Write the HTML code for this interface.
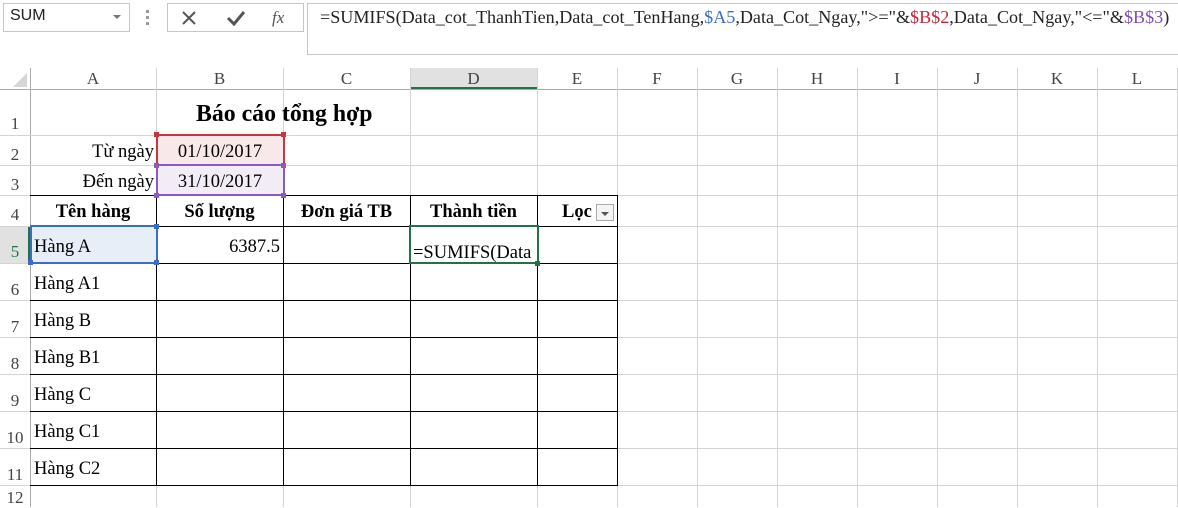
<!DOCTYPE html><html><head><meta charset="utf-8"><style>
*{margin:0;padding:0;box-sizing:border-box}
body{width:1178px;height:507px;background:#fff;position:relative;overflow:hidden;font-family:"Liberation Serif",serif;font-size:18.5px;color:#000}
.a{position:absolute}
.vl{position:absolute;width:1px;background:#d4d4d4}
.hl{position:absolute;height:1px;background:#d4d4d4}
.ch{position:absolute;top:68px;height:21px;text-align:center;color:#444;font-size:17px;line-height:22px}
.rh{position:absolute;left:0;width:30px;text-align:center;color:#444;font-size:17px}
.bv{position:absolute;width:1px;background:#000}
.bh{position:absolute;height:1px;background:#000}
.t{position:absolute;white-space:nowrap}
.b{font-weight:bold}
</style></head><body>
<div class="a" style="left:3px;top:3px;width:127px;height:29px;border:1px solid #c6c6c6"></div>
<div class="t" style="left:10px;top:7px;font-family:'Liberation Sans',sans-serif;font-size:16px;color:#222">SUM</div>
<div class="a" style="left:113px;top:15px;border-left:4px solid transparent;border-right:4px solid transparent;border-top:4px solid #777"></div>
<div class="a" style="left:146px;top:10px;width:3px;height:3px;background:#999"></div>
<div class="a" style="left:146px;top:16px;width:3px;height:3px;background:#999"></div>
<div class="a" style="left:146px;top:22px;width:3px;height:3px;background:#999"></div>
<div class="a" style="left:167px;top:3px;width:137px;height:29px;border:1px solid #c6c6c6"></div>
<svg class="a" style="left:180px;top:8px" width="110" height="20"><path d="M3 4L15 16M15 4L3 16" stroke="#555" stroke-width="2"/><path d="M48 10L54 16L64 4" stroke="#555" stroke-width="3" fill="none"/><text x="92" y="15" font-family="Liberation Serif" font-style="italic" font-size="17" fill="#555">fx</text></svg>
<div class="a" style="left:307px;top:3px;width:875px;height:52px;border:1px solid #c6c6c6"></div>
<div class="t" style="left:320px;top:7px;font-size:18.1px;color:#222">=SUMIFS(Data_cot_ThanhTien,Data_cot_TenHang,<span style="color:#3b6dc8">$A5</span>,Data_Cot_Ngay,"&gt;="&amp;<span style="color:#c8253a">$B$2</span>,Data_Cot_Ngay,"&lt;="&amp;<span style="color:#7e4fb8">$B$3</span>)</div>
<div class="hl" style="left:0;top:89px;width:1178px;background:#ababab"></div>
<div class="vl" style="left:30px;top:68px;height:439px;background:#ababab"></div>
<svg class="a" style="left:12px;top:72px" width="16" height="16"><path d="M15 1L15 15L1 15Z" fill="#d6d6d6"/></svg>
<div class="a" style="left:410px;top:68px;width:128px;height:21px;background:#e1e1e1;border-bottom:2px solid #217346"></div>
<div class="a" style="left:0;top:226px;width:30px;height:37px;background:#e1e1e1;border-right:2px solid #217346"></div>
<div class="ch" style="left:30px;width:126px">A</div>
<div class="ch" style="left:156px;width:127px">B</div>
<div class="ch" style="left:283px;width:127px">C</div>
<div class="ch" style="left:410px;width:127px">D</div>
<div class="ch" style="left:537px;width:80px">E</div>
<div class="ch" style="left:617px;width:80px">F</div>
<div class="ch" style="left:697px;width:80px">G</div>
<div class="ch" style="left:777px;width:80px">H</div>
<div class="ch" style="left:857px;width:80px">I</div>
<div class="ch" style="left:937px;width:80px">J</div>
<div class="ch" style="left:1017px;width:80px">K</div>
<div class="ch" style="left:1097px;width:80px">L</div>
<div class="vl" style="left:156px;top:68px;height:439px"></div>
<div class="vl" style="left:283px;top:68px;height:439px"></div>
<div class="vl" style="left:410px;top:68px;height:439px"></div>
<div class="vl" style="left:537px;top:68px;height:439px"></div>
<div class="vl" style="left:617px;top:68px;height:439px"></div>
<div class="vl" style="left:697px;top:68px;height:439px"></div>
<div class="vl" style="left:777px;top:68px;height:439px"></div>
<div class="vl" style="left:857px;top:68px;height:439px"></div>
<div class="vl" style="left:937px;top:68px;height:439px"></div>
<div class="vl" style="left:1017px;top:68px;height:439px"></div>
<div class="vl" style="left:1097px;top:68px;height:439px"></div>
<div class="vl" style="left:1177px;top:68px;height:439px"></div>
<div class="hl" style="left:0;top:135px;width:1178px"></div>
<div class="hl" style="left:0;top:165px;width:1178px"></div>
<div class="hl" style="left:0;top:195px;width:1178px"></div>
<div class="hl" style="left:0;top:226px;width:1178px"></div>
<div class="hl" style="left:0;top:263px;width:1178px"></div>
<div class="hl" style="left:0;top:300px;width:1178px"></div>
<div class="hl" style="left:0;top:337px;width:1178px"></div>
<div class="hl" style="left:0;top:374px;width:1178px"></div>
<div class="hl" style="left:0;top:411px;width:1178px"></div>
<div class="hl" style="left:0;top:448px;width:1178px"></div>
<div class="hl" style="left:0;top:485px;width:1178px"></div>
<div class="rh" style="top:114px">1</div>
<div class="rh" style="top:145px">2</div>
<div class="rh" style="top:175px">3</div>
<div class="rh" style="top:205px">4</div>
<div class="rh" style="top:242px;color:#217346">5</div>
<div class="rh" style="top:280px">6</div>
<div class="rh" style="top:317px">7</div>
<div class="rh" style="top:354px">8</div>
<div class="rh" style="top:391px">9</div>
<div class="rh" style="top:428px">10</div>
<div class="rh" style="top:465px">11</div>
<div class="rh" style="top:488px">12</div>
<div class="a" style="left:157px;top:136px;width:126px;height:29px;background:#f9e8e9"></div>
<div class="a" style="left:157px;top:166px;width:126px;height:29px;background:#f1ecf6"></div>
<div class="a" style="left:31px;top:227px;width:125px;height:36px;background:#e8eef8"></div>
<div class="bh" style="left:30px;top:195px;width:588px"></div>
<div class="bh" style="left:30px;top:226px;width:588px"></div>
<div class="bh" style="left:30px;top:263px;width:588px"></div>
<div class="bh" style="left:30px;top:300px;width:588px"></div>
<div class="bh" style="left:30px;top:337px;width:588px"></div>
<div class="bh" style="left:30px;top:374px;width:588px"></div>
<div class="bh" style="left:30px;top:411px;width:588px"></div>
<div class="bh" style="left:30px;top:448px;width:588px"></div>
<div class="bh" style="left:30px;top:485px;width:588px"></div>
<div class="bv" style="left:156px;top:195px;height:291px"></div>
<div class="bv" style="left:283px;top:195px;height:291px"></div>
<div class="bv" style="left:410px;top:195px;height:291px"></div>
<div class="bv" style="left:537px;top:195px;height:291px"></div>
<div class="bv" style="left:617px;top:195px;height:291px"></div>
<div class="a" style="left:156px;top:134px;width:129px;height:32px;border:2px solid #c8353f"></div>
<div class="a" style="left:154px;top:132px;width:5px;height:5px;background:#c8353f"></div>
<div class="a" style="left:281px;top:132px;width:5px;height:5px;background:#c8353f"></div>
<div class="a" style="left:156px;top:164px;width:129px;height:32px;border:2px solid #8a5cc0"></div>
<div class="a" style="left:154px;top:163px;width:5px;height:5px;background:#8a5cc0"></div>
<div class="a" style="left:281px;top:163px;width:5px;height:5px;background:#8a5cc0"></div>
<div class="a" style="left:154px;top:193px;width:5px;height:5px;background:#8a5cc0"></div>
<div class="a" style="left:281px;top:193px;width:5px;height:5px;background:#8a5cc0"></div>
<div class="a" style="left:30px;top:225px;width:128px;height:39px;border:2px solid #3b6dc8"></div>
<div class="a" style="left:154px;top:224px;width:5px;height:5px;background:#3b6dc8"></div>
<div class="a" style="left:154px;top:260px;width:5px;height:5px;background:#3b6dc8"></div>
<div class="a" style="left:28px;top:260px;width:5px;height:5px;background:#3b6dc8"></div>
<div class="a" style="left:409px;top:225px;width:130px;height:39px;border:2px solid #217346"></div>
<div class="a" style="left:535px;top:261px;width:5px;height:5px;background:#217346"></div>
<div class="t b" style="left:196px;top:101px;font-size:23.8px">Báo cáo tổng hợp</div>
<div class="t" style="left:30px;width:124px;top:142px;text-align:right">Từ ngày</div>
<div class="t" style="left:30px;width:124px;top:172px;text-align:right">Đến ngày</div>
<div class="t" style="left:157px;width:126px;top:142px;text-align:center">01/10/2017</div>
<div class="t" style="left:157px;width:126px;top:172px;text-align:center">31/10/2017</div>
<div class="t b" style="left:30px;width:126px;top:202px;text-align:center">Tên hàng</div>
<div class="t b" style="left:156px;width:127px;top:202px;text-align:center">Số lượng</div>
<div class="t b" style="left:283px;width:127px;top:202px;text-align:center">Đơn giá TB</div>
<div class="t b" style="left:410px;width:127px;top:202px;text-align:center">Thành tiền</div>
<div class="t b" style="left:562px;top:202px">Lọc</div>
<div class="a" style="left:596px;top:204px;width:18px;height:17px;border:1px solid #aaa;background:#f4f4f4"></div>
<div class="a" style="left:601px;top:212px;border-left:4px solid transparent;border-right:4px solid transparent;border-top:4px solid #555"></div>
<div class="t" style="left:34px;top:237px">Hàng A</div>
<div class="t" style="left:156px;width:124px;top:237px;text-align:right">6387.5</div>
<div class="t" style="left:413px;top:243px">=SUMIFS(Data</div>
<div class="t" style="left:34px;top:274px">Hàng A1</div>
<div class="t" style="left:34px;top:311px">Hàng B</div>
<div class="t" style="left:34px;top:348px">Hàng B1</div>
<div class="t" style="left:34px;top:385px">Hàng C</div>
<div class="t" style="left:34px;top:422px">Hàng C1</div>
<div class="t" style="left:34px;top:459px">Hàng C2</div>
</body></html>
